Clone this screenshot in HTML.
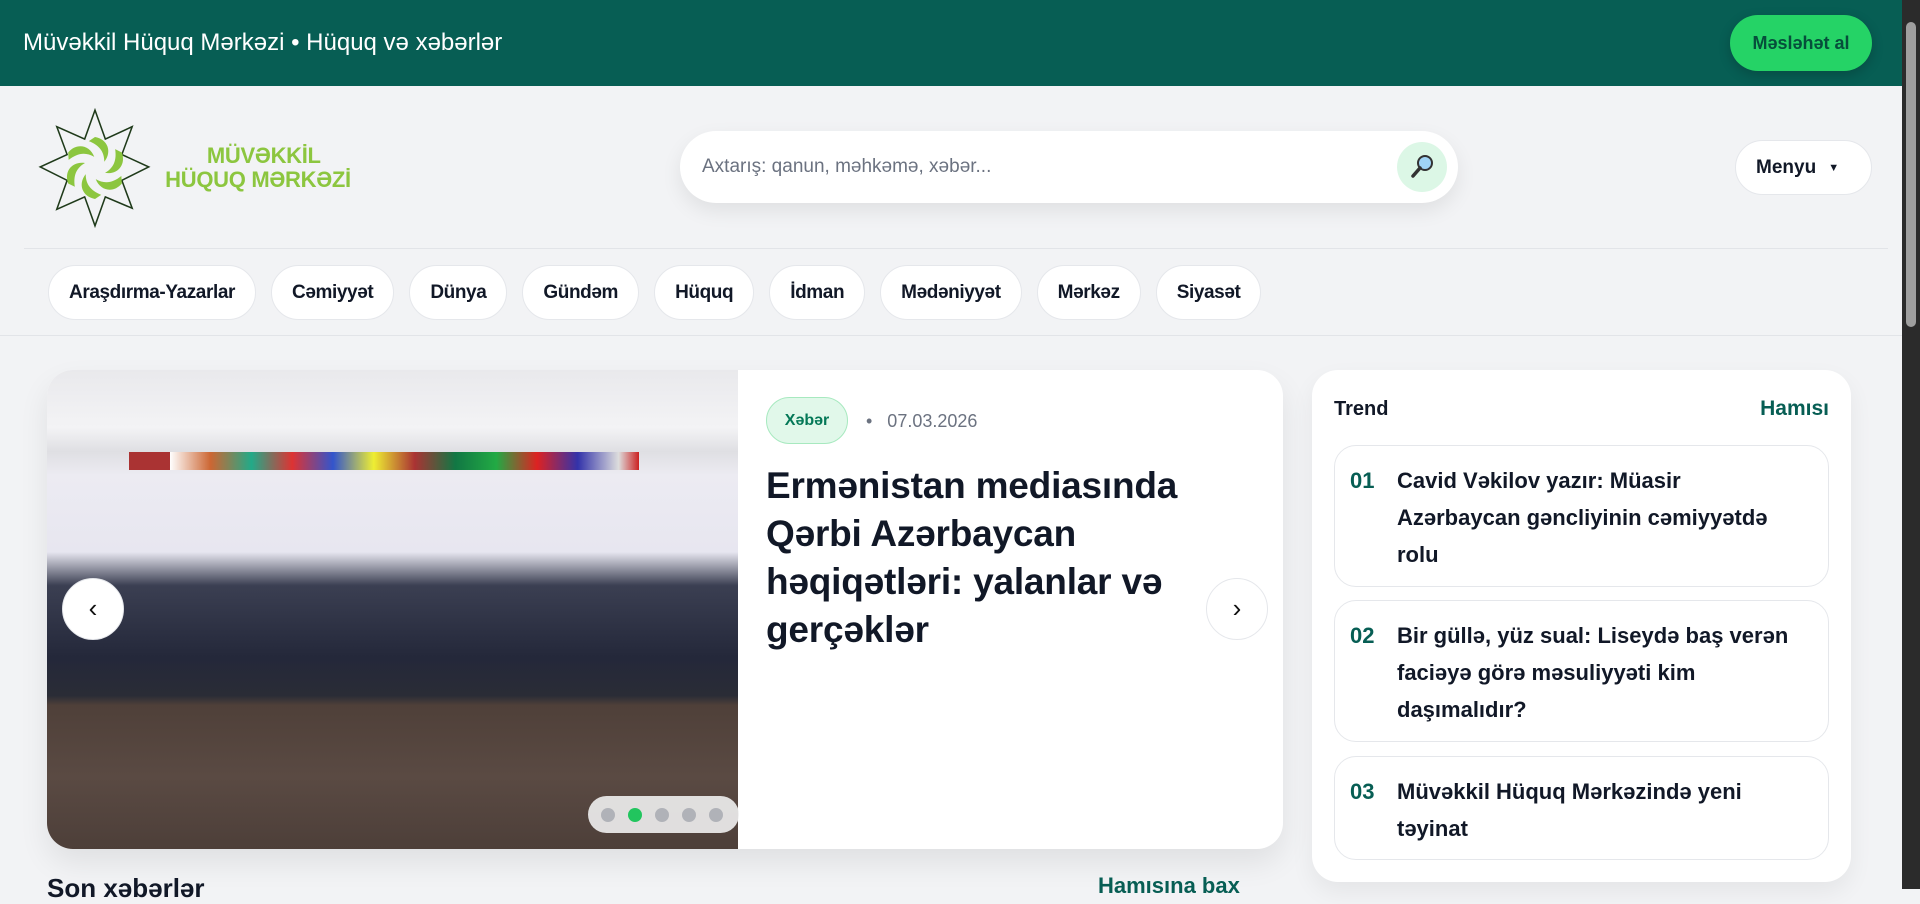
<!DOCTYPE html>
<html><head><meta charset="utf-8"><style>
*{box-sizing:border-box;margin:0;padding:0}
body{width:1920px;height:889px;overflow:hidden;background:#f2f3f5;font-family:"Liberation Sans",sans-serif;color:#111827;position:relative}
.top{position:absolute;left:0;top:0;width:1902px;height:86px;background:#075e54}
.top .t{position:absolute;left:23px;top:29px;color:#fff;font-size:24px}
.btn{position:absolute;left:1730px;top:15px;width:142px;height:56px;border-radius:28px;background:#25d366;color:#064e3b;font-weight:bold;font-size:18px;text-align:center;line-height:56px;box-shadow:0 4px 12px rgba(0,0,0,.2)}
.sb{position:absolute;left:1902px;top:0;width:18px;height:889px;background:#2b2b2b}
.sb i{position:absolute;left:4px;top:22px;width:10px;height:305px;background:#9f9f9f;border-radius:5px}
.logo{position:absolute;left:32px;top:108px}
.lt{position:absolute;left:159px;top:144px;color:#8cc63f;font-weight:bold;font-size:22px;line-height:24px;letter-spacing:-.3px;text-align:center;width:198px}
.search{position:absolute;left:680px;top:131px;width:778px;height:72px;background:#fff;border-radius:36px;box-shadow:0 8px 20px rgba(0,0,0,.08)}
.search span{position:absolute;left:22px;top:25px;font-size:19px;color:#6b7280}
.sbtn{position:absolute;left:717px;top:11px;width:50px;height:50px;border-radius:25px;background:#dcf7e6}
.menu{position:absolute;left:1735px;top:140px;width:137px;height:55px;background:#fff;border:1px solid #e5e7eb;border-radius:28px;font-weight:bold;font-size:19px;line-height:53px;padding-left:20px}
.menu b{font-size:11px;margin-left:12px;vertical-align:2px}
.hl{position:absolute;left:24px;top:248px;width:1864px;height:1px;background:#e2e4e8}
.hl2{position:absolute;left:0;top:335px;width:1902px;height:1px;background:#e2e4e8}
.chips{position:absolute;left:48px;top:265px;display:flex;gap:15px}
.chips div{height:55px;line-height:53px;background:#fff;border:1px solid #e5e7eb;border-radius:28px;padding:0 20px;font-weight:bold;font-size:19px;letter-spacing:-.4px}
.hero{position:absolute;left:47px;top:370px;width:1236px;height:479px;background:#fff;border-radius:26px;overflow:hidden;box-shadow:0 14px 30px rgba(0,0,0,.08)}
.photo{position:absolute;left:0;top:0;width:691px;height:479px;background:linear-gradient(180deg,#e9e9ec 0%,#f3f3f5 12%,#dfdfe3 17%,#ecebf2 22%,#e7e6f0 38%,#3b3f52 45%,#24283a 60%,#2a2c36 68%,#4f4039 70%,#5a4a43 85%,#4d3f39 100%)}
.flags{position:absolute;left:82px;top:82px;width:510px;height:18px;background:linear-gradient(90deg,#a33 0,#a33 8%,#fff 8%,#c63 16%,#2a8 24%,#d33 32%,#35c 40%,#ee3 48%,#a33 56%,#174 64%,#2a4 72%,#d22 80%,#33a 88%,#ddd 96%,#c22 100%)}
.arr{position:absolute;width:62px;height:62px;border-radius:31px;background:#fff;border:1px solid #e5e7eb;text-align:center;line-height:58px;font-size:26px;color:#111}
.dots{position:absolute;left:541px;top:426px;width:151px;height:37px;border-radius:19px;background:rgba(240,240,240,.9)}
.dots i{position:absolute;top:12px;width:14px;height:14px;border-radius:7px;background:#b0b2b8}
.badge{position:absolute;left:719px;top:27px;width:82px;height:47px;border-radius:24px;background:#e1f8ea;border:1px solid #a7e9bf;color:#047857;font-weight:bold;font-size:16px;text-align:center;line-height:45px}
.date{position:absolute;left:819px;top:41px;color:#6b7280;font-size:18px}
.title{position:absolute;left:719px;top:92px;font-size:37px;font-weight:bold;line-height:48px;color:#111827;letter-spacing:-.2px}
.trend{position:absolute;left:1312px;top:370px;width:539px;height:512px;background:#fff;border-radius:26px;box-shadow:0 10px 24px rgba(0,0,0,.06)}
.trend h3{position:absolute;left:22px;top:28px;font-size:20px}
.trend .all{position:absolute;right:22px;top:27px;font-size:21px;font-weight:bold;color:#075e54}
.it{position:absolute;left:22px;width:495px;border:1px solid #e5e7eb;border-radius:22px;padding:16px 20px 0 62px;font-weight:bold;font-size:22px;line-height:37px}
.it b{position:absolute;left:15px;top:16px;color:#075e54}
.sec{position:absolute;left:47px;top:873px;font-size:26px;font-weight:bold}
.sec2{position:absolute;left:1098px;top:873px;font-size:22px;font-weight:bold;color:#075e54}
</style></head><body>
<div class="top"><div class="t">Müvəkkil Hüquq Mərkəzi • Hüquq və xəbərlər</div><div class="btn">Məsləhət al</div></div>
<div class="sb"><i></i></div>
<svg class="logo" width="126" height="122" viewBox="0 0 122 118"><polygon points="61,2 71,30 97,18 87,45 113,57 87,70 97,97 71,86 61,114 51,86 24,98 34,70 8,57 34,45 24,18 51,30" fill="none" stroke="#1f3a1a" stroke-width="1.5"/>
<g fill="#8cc63f" transform="translate(61,58)"><path id="p" d="M0-30C12-28 17-16 9-6C9-16 4-22-6-26Z"/><use href="#p" transform="rotate(60)"/><use href="#p" transform="rotate(120)"/><use href="#p" transform="rotate(180)"/><use href="#p" transform="rotate(240)"/><use href="#p" transform="rotate(300)"/></g></svg>
<div class="lt">&nbsp;&nbsp;MÜVƏKKİL<br>HÜQUQ MƏRKƏZİ</div>
<div class="search"><span>Axtarış: qanun, məhkəmə, xəbər...</span><div class="sbtn"><svg width="50" height="50"><circle cx="28" cy="21" r="7" fill="#9fd3f5" stroke="#333" stroke-width="2"/><line x1="23" y1="26" x2="16" y2="34" stroke="#333" stroke-width="3.5" stroke-linecap="round"/></svg></div></div>
<div class="menu">Menyu<b>▼</b></div>
<div class="hl"></div>
<div class="chips"><div>Araşdırma-Yazarlar</div><div>Cəmiyyət</div><div>Dünya</div><div>Gündəm</div><div>Hüquq</div><div>İdman</div><div>Mədəniyyət</div><div>Mərkəz</div><div>Siyasət</div></div>
<div class="hl2"></div>
<div class="hero">
<div class="photo"><div class="flags"></div></div>
<div class="arr" style="left:15px;top:208px">‹</div>
<div class="arr" style="left:1159px;top:208px">›</div>
<div class="dots"><i style="left:13px"></i><i style="left:40px;background:#22c55e"></i><i style="left:67px"></i><i style="left:94px"></i><i style="left:121px"></i></div>
<div class="badge">Xəbər</div><div class="date">•&nbsp;&nbsp;&nbsp;07.03.2026</div>
<div class="title">Ermənistan mediasında<br>Qərbi Azərbaycan<br>həqiqətləri: yalanlar və<br>gerçəklər</div>
</div>
<div class="trend"><h3>Trend</h3><div class="all">Hamısı</div>
<div class="it" style="top:75px;height:142px"><b>01</b>Cavid Vəkilov yazır: Müasir Azərbaycan gəncliyinin cəmiyyətdə rolu</div>
<div class="it" style="top:230px;height:142px"><b>02</b>Bir güllə, yüz sual: Liseydə baş verən faciəyə görə məsuliyyəti kim daşımalıdır?</div>
<div class="it" style="top:386px;height:104px"><b>03</b>Müvəkkil Hüquq Mərkəzində yeni təyinat</div>
</div>
<div class="sec">Son xəbərlər</div><div class="sec2">Hamısına bax</div>
</body></html>
